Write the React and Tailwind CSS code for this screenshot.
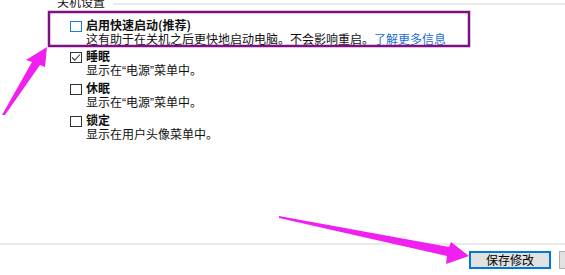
const Q = ({ children }) => <span className="font-['Liberation_Sans',sans-serif]">{children}</span>;

const options = [
  {
    title: '启用快速启动(推荐)',
    desc: <>这有助于在关机之后更快地启动电脑。不会影响重启。</>,
    link: '了解更多信息',
    checked: false,
    focused: true,
  },
  { title: '睡眠', desc: <>显示在<Q>“</Q>电源<Q>”</Q>菜单中。</>, checked: true },
  { title: '休眠', desc: <>显示在<Q>“</Q>电源<Q>”</Q>菜单中。</>, checked: false },
  { title: '锁定', desc: <>显示在用户头像菜单中。</>, checked: false },
];

const Checkbox = ({ checked, focused }) => (
  <div
    className={`w-[12px] h-[11px] mt-[3px] shrink-0 border bg-white flex items-center justify-center ${
      focused ? 'border-[#1e7fd8]' : 'border-[#333333]'
    }`}
  >
    {checked && (
      <svg width="10" height="9" viewBox="0 0 10 9">
        <polyline points="1,4.5 3.8,7.2 9,1.5" fill="none" stroke="#444" strokeWidth="1.1" />
      </svg>
    )}
  </div>
);

const App = () => {
  return (
    <div className="relative w-[565px] h-[275px] overflow-hidden bg-white flex flex-col font-['Noto_Sans_CJK_SC','Noto_Sans',sans-serif] text-[12px] leading-[14px] text-[#111]">
      {/* 关机设置 */}
      <div className="flex-1 pl-[57px]">
        <div className="flex items-start gap-[8px] -mt-[5px]">
          <span>关机设置</span>
          <div className="flex-1 h-[2px] mt-[8px] bg-[#ebebeb]" />
        </div>

        <div className="flex flex-col gap-[3px] mt-[9px] pl-[13px]">
          {options.map((opt) => (
            <div key={opt.title} className="flex gap-[4px]">
              <Checkbox checked={opt.checked} focused={opt.focused} />
              <div className="flex flex-col">
                <span className="font-bold">{opt.title}</span>
                <span className="whitespace-nowrap">
                  {opt.desc}
                  {opt.link && <span className="text-[#1a6fd0] underline">{opt.link}</span>}
                </span>
              </div>
            </div>
          ))}
        </div>
      </div>

      {/* footer */}
      <div className="h-[2px] bg-[#ebebeb]" />
      <div className="h-[30px] pt-[6px] flex justify-end gap-[8px] -mr-[76px]">
        <button className="w-[82px] h-[18px] border-2 border-[#0078d7] bg-[#e1e1e1] text-[12px] leading-[14px] text-black">
          保存修改
        </button>
        <button className="w-[82px] h-[18px] border border-[#adadad] bg-[#e1e1e1] text-[12px] leading-[14px] text-black">
          取消
        </button>
      </div>

      {/* annotations */}
      <svg
        className="absolute inset-0 pointer-events-none"
        width="565"
        height="275"
        viewBox="0 0 565 275"
      >
        <rect x="49" y="12" width="420" height="34" fill="none" stroke="#7f1084" strokeWidth="2.5" />
        <polygon points="47,47 26,60 32,62 2,115 5,115 40,65 45,67" fill="#f020f0" />
        <polygon points="279,216 449,247 451,242 469,256 446,264 447,256 279,218" fill="#f020f0" />
      </svg>
    </div>
  );
};

export default App;
